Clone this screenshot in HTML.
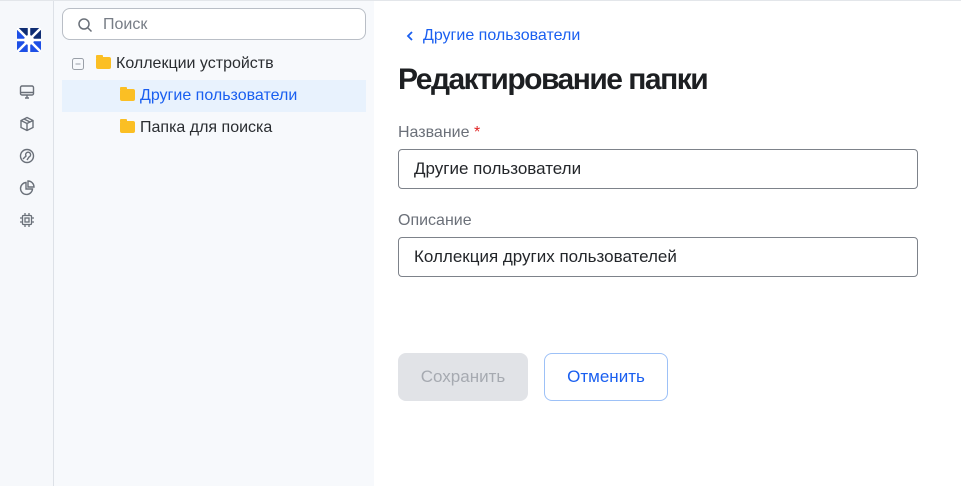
<!DOCTYPE html>
<html><head><meta charset="utf-8"><style>
*{box-sizing:border-box;margin:0;padding:0}
body{width:961px;height:486px;font-family:"Liberation Sans",sans-serif;background:#fff;position:relative;overflow:hidden}
.rail{position:absolute;left:0;top:0;width:54px;height:486px;background:#f6f8fb;border-right:1px solid #dde1e7}
.tree{position:absolute;left:54px;top:0;width:320px;height:486px;background:#f7f9fc}
.topline{position:absolute;left:0;top:0;width:961px;height:1px;background:#e3e6ea}
.search{position:absolute;left:62px;top:8px;width:304px;height:32px;border:1px solid #b9bec6;border-radius:8px;background:#fff}
.search span{position:absolute;left:40px;top:7px;font-size:16px;color:#777d86}
.row{position:absolute;font-size:16px;color:#2a2d31;height:32px;line-height:32px}
.folder{display:inline-block;width:15px;height:12px;background:#fbbf24;border-radius:2px;vertical-align:-1px;margin-right:5px;position:relative}
.folder:before{content:"";position:absolute;left:0;top:-2px;width:7px;height:3px;background:#fbbf24;border-radius:1px 1px 0 0}
.ic{position:absolute;left:19px}
.main{position:absolute;left:398px}
.label{font-size:16px;color:#6b7079}
.input{position:absolute;left:398px;width:520px;height:40px;border:1px solid #7d828a;border-radius:4px;font-size:17px;color:#23262a;padding-left:15px;line-height:38px}
</style></head><body>
<div class="rail"></div><div class="tree"></div><div class="topline"></div>
<svg style="position:absolute;left:17px;top:28px" width="24" height="24" viewBox="0 0 24 24">
<polygon points="0,0 12,0 12,12" fill="#0f2d73"/><polygon points="12,0 24,0 12,12" fill="#0f2d73"/>
<polygon points="24,0 24,12 12,12" fill="#0f2d73"/><polygon points="0,0 0,12 12,12" fill="#1d4fe6"/>
<polygon points="0,12 0,24 12,12" fill="#1d4fe6"/><polygon points="0,24 12,24 12,12" fill="#1d4fe6"/>
<polygon points="12,24 24,24 12,12" fill="#1d4fe6"/><polygon points="24,24 24,12 12,12" fill="#1d4fe6"/>
<g stroke="#fff" stroke-width="2.5"><line x1="0" y1="0" x2="24" y2="24"/><line x1="24" y1="0" x2="0" y2="24"/><line x1="12" y1="0" x2="12" y2="24"/><line x1="0" y1="12" x2="24" y2="12"/></g>
<circle cx="12" cy="12" r="5" fill="#fff"/>
</svg>
<svg class="ic" style="top:84px" width="16" height="16" viewBox="0 0 16 16" fill="none" stroke="#6a7079" stroke-width="1.4"><rect x="1.5" y="2" width="13" height="9" rx="1.5"/><path d="M1.5 8.5h13M6 14h4M8 11v3"/></svg>
<svg class="ic" style="top:116px" width="16" height="16" viewBox="0 0 16 16" fill="none" stroke="#6a7079" stroke-width="1.4"><path d="M8 1.5l6 3v7l-6 3-6-3v-7zM2 4.5l6 3 6-3M8 7.5v7M5 3l6 3"/></svg>
<svg class="ic" style="top:148px" width="16" height="16" viewBox="0 0 16 16" fill="none" stroke="#6a7079" stroke-width="1.4"><circle cx="8" cy="8" r="6.5"/><path d="M4 11l3-3a2.5 2.5 0 1 1 3 1l-2 3"/></svg>
<svg class="ic" style="top:180px" width="16" height="16" viewBox="0 0 16 16" fill="none" stroke="#6a7079" stroke-width="1.4"><path d="M7 2.5a6 6 0 1 0 6.5 6.5H7z"/><path d="M9 1v6h6a6 6 0 0 0-6-6z"/></svg>
<svg class="ic" style="top:212px" width="16" height="16" viewBox="0 0 16 16" fill="none" stroke="#6a7079" stroke-width="1.3"><rect x="3.5" y="3.5" width="9" height="9" rx="1"/><rect x="6" y="6" width="4" height="4"/><path d="M6 1v2.5M10 1v2.5M6 12.5V15M10 12.5V15M1 6h2.5M1 10h2.5M12.5 6H15M12.5 10H15"/></svg>
<div class="search"><svg style="position:absolute;left:14px;top:8px" width="16" height="16" viewBox="0 0 16 16" fill="none" stroke="#6a7079" stroke-width="1.5"><circle cx="7" cy="7" r="5"/><path d="M11 11l3.5 3.5"/></svg><span>Поиск</span></div>
<svg style="position:absolute;left:72px;top:58px" width="12" height="12" viewBox="0 0 12 12" fill="none" stroke="#9aa0a8"><rect x="0.5" y="0.5" width="11" height="11" rx="2"/><path d="M3.5 6h5"/></svg>
<div class="row" style="left:96px;top:48px"><span class="folder"></span>Коллекции устройств</div>
<div style="position:absolute;left:62px;top:80px;width:304px;height:32px;background:#e8f2fd"></div>
<div class="row" style="left:120px;top:80px;color:#1a5ff0"><span class="folder"></span>Другие пользователи</div>
<div class="row" style="left:120px;top:112px"><span class="folder"></span>Папка для поиска</div>
<svg style="position:absolute;left:405px;top:30px" width="10" height="12" viewBox="0 0 10 12" fill="none" stroke="#1a5ff0" stroke-width="1.8"><path d="M7 2L3 6l4 4"/></svg>
<div class="main" style="left:423px;top:27px;font-size:16px;color:#1a5ff0">Другие пользователи</div>
<div class="main" style="top:63px;font-size:30px;font-weight:bold;color:#1d1f22;letter-spacing:-1.5px">Редактирование папки</div>
<div class="main label" style="top:124px">Название <span style="color:#e02424">*</span></div>
<div class="input" style="top:149px">Другие пользователи</div>
<div class="main label" style="top:212px">Описание</div>
<div class="input" style="top:237px">Коллекция других пользователей</div>
<div style="position:absolute;left:398px;top:353px;width:130px;height:48px;background:#e1e3e7;border-radius:8px;color:#a6aab1;font-size:17px;text-align:center;line-height:48px">Сохранить</div>
<div style="position:absolute;left:544px;top:353px;width:124px;height:48px;border:1px solid #9dc1f7;border-radius:8px;color:#1a5ff0;font-size:17px;text-align:center;line-height:46px">Отменить</div>
</body></html>
